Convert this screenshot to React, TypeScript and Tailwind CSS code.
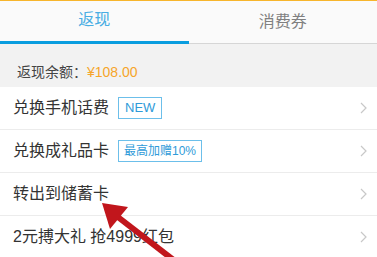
import React from 'react';

const font = { fontFamily: '"Liberation Sans", "Noto Sans CJK SC", sans-serif' };

const Chevron: React.FC = () => (
  <svg width="7" height="12" viewBox="0 0 7 12" className="shrink-0">
    <path d="M1 1 L6 6 L1 11" fill="none" stroke="#c8c8c8" strokeWidth="1.2" />
  </svg>
);

interface RowItem {
  label: string;
  badge?: string;
  small?: boolean;
}

const rows: RowItem[] = [
  { label: '兑换手机话费', badge: 'NEW' },
  { label: '兑换成礼品卡', badge: '最高加赠10%', small: true },
  { label: '转出到储蓄卡' },
  { label: '2元搏大礼 抢4999红包' },
];

const App: React.FC = () => {
  return (
    <div className="relative w-[377px] h-[257px] overflow-hidden bg-white" style={font}>
      <div className="h-px bg-[#f7b52c]" />
      <div className="flex bg-[#fafafa]">
        <div className="flex-1 h-[43px] flex items-center justify-center border-b-[3px] border-[#0a9ddf] pb-[2px] text-[16px] text-[#48ade3]">
          返现
        </div>
        <div className="flex-1 h-[43px] flex items-center justify-center border-b border-[#d6d6d6] pb-[1px] text-[16px] text-[#808080]">
          消费券
        </div>
      </div>
      <div className="h-[43px] bg-[#f2f2f2] pl-[17px] pt-[18px] text-[14px] leading-[20px] text-[#444]">
        返现余额：<span className="text-[#f6a52a]">¥108.00</span>
      </div>
      {rows.map((row) => (
        <div
          key={row.label}
          className="h-[43px] flex items-center justify-between border-b border-[#ececec] pl-[13px] pr-[10px]"
        >
          <div className="flex items-center gap-[9px]">
            <span className="text-[16px] text-[#333]">{row.label}</span>
            {row.badge && (
              <span
                className={
                  row.small
                    ? 'h-[22px] flex items-center px-[5px] border border-[#6cbfea] text-[12px] text-[#2f9bd9]'
                    : 'h-[22px] flex items-center px-[6px] border border-[#6cbfea] text-[13px] text-[#2f9bd9]'
                }
              >
                {row.badge}
              </span>
            )}
          </div>
          <Chevron />
        </div>
      ))}
      <svg className="absolute left-0 top-0 pointer-events-none" width="377" height="257" viewBox="0 0 377 257">
        <line x1="114" y1="214" x2="180" y2="265" stroke="#c1161c" strokeWidth="6" />
        <polygon points="102,203 128,207 110,229" fill="#c1161c" />
      </svg>
    </div>
  );
};

export default App;
